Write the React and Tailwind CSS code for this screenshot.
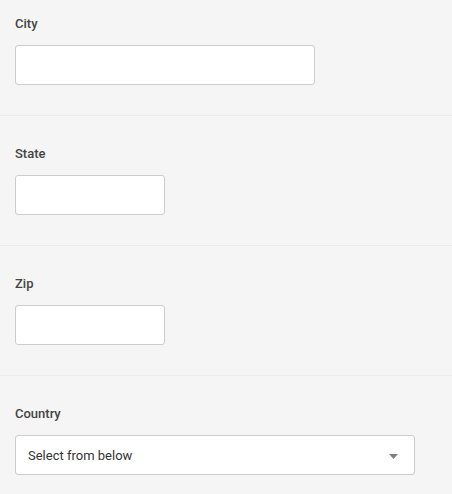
export default function App() {
  const font = { fontFamily: "Roboto, 'Liberation Sans', sans-serif" };
  return (
    <div className="w-[452px] h-[494px] overflow-hidden bg-[#f5f5f5] text-[#333]" style={font}>
      <div className="pt-[15px] pb-[30px] px-[15px] border-b border-[#ebebeb]">
        <label className="block text-[13px] leading-[18px] font-medium text-[#444] mb-[12px]">City</label>
        <input type="text" className="block w-[300px] h-[40px] bg-white border border-[#ccc] rounded-[3px] outline-none" />
      </div>
      <div className="pt-[29px] pb-[30px] px-[15px] border-b border-[#ebebeb]">
        <label className="block text-[13px] leading-[18px] font-medium text-[#444] mb-[12px]">State</label>
        <input type="text" className="block w-[150px] h-[40px] bg-white border border-[#ccc] rounded-[3px] outline-none" />
      </div>
      <div className="pt-[29px] pb-[30px] px-[15px] border-b border-[#ebebeb]">
        <label className="block text-[13px] leading-[18px] font-medium text-[#444] mb-[12px]">Zip</label>
        <input type="text" className="block w-[150px] h-[40px] bg-white border border-[#ccc] rounded-[3px] outline-none" />
      </div>
      <div className="pt-[29px] pb-[30px] px-[15px]">
        <label className="block text-[13px] leading-[18px] font-medium text-[#444] mb-[12px]">Country</label>
        <div className="flex items-center justify-between w-[400px] h-[40px] bg-white border border-[#ccc] rounded-[3px] pl-[12px] pr-[16px]">
          <span className="text-[13px] text-[#333] pt-[2px]">Select from below</span>
          <svg width="9" height="5" viewBox="0 0 9 5" className="mt-[3px]">
            <path d="M0 0 H9 L4.5 5 Z" fill="#808080" />
          </svg>
        </div>
      </div>
    </div>
  );
}
